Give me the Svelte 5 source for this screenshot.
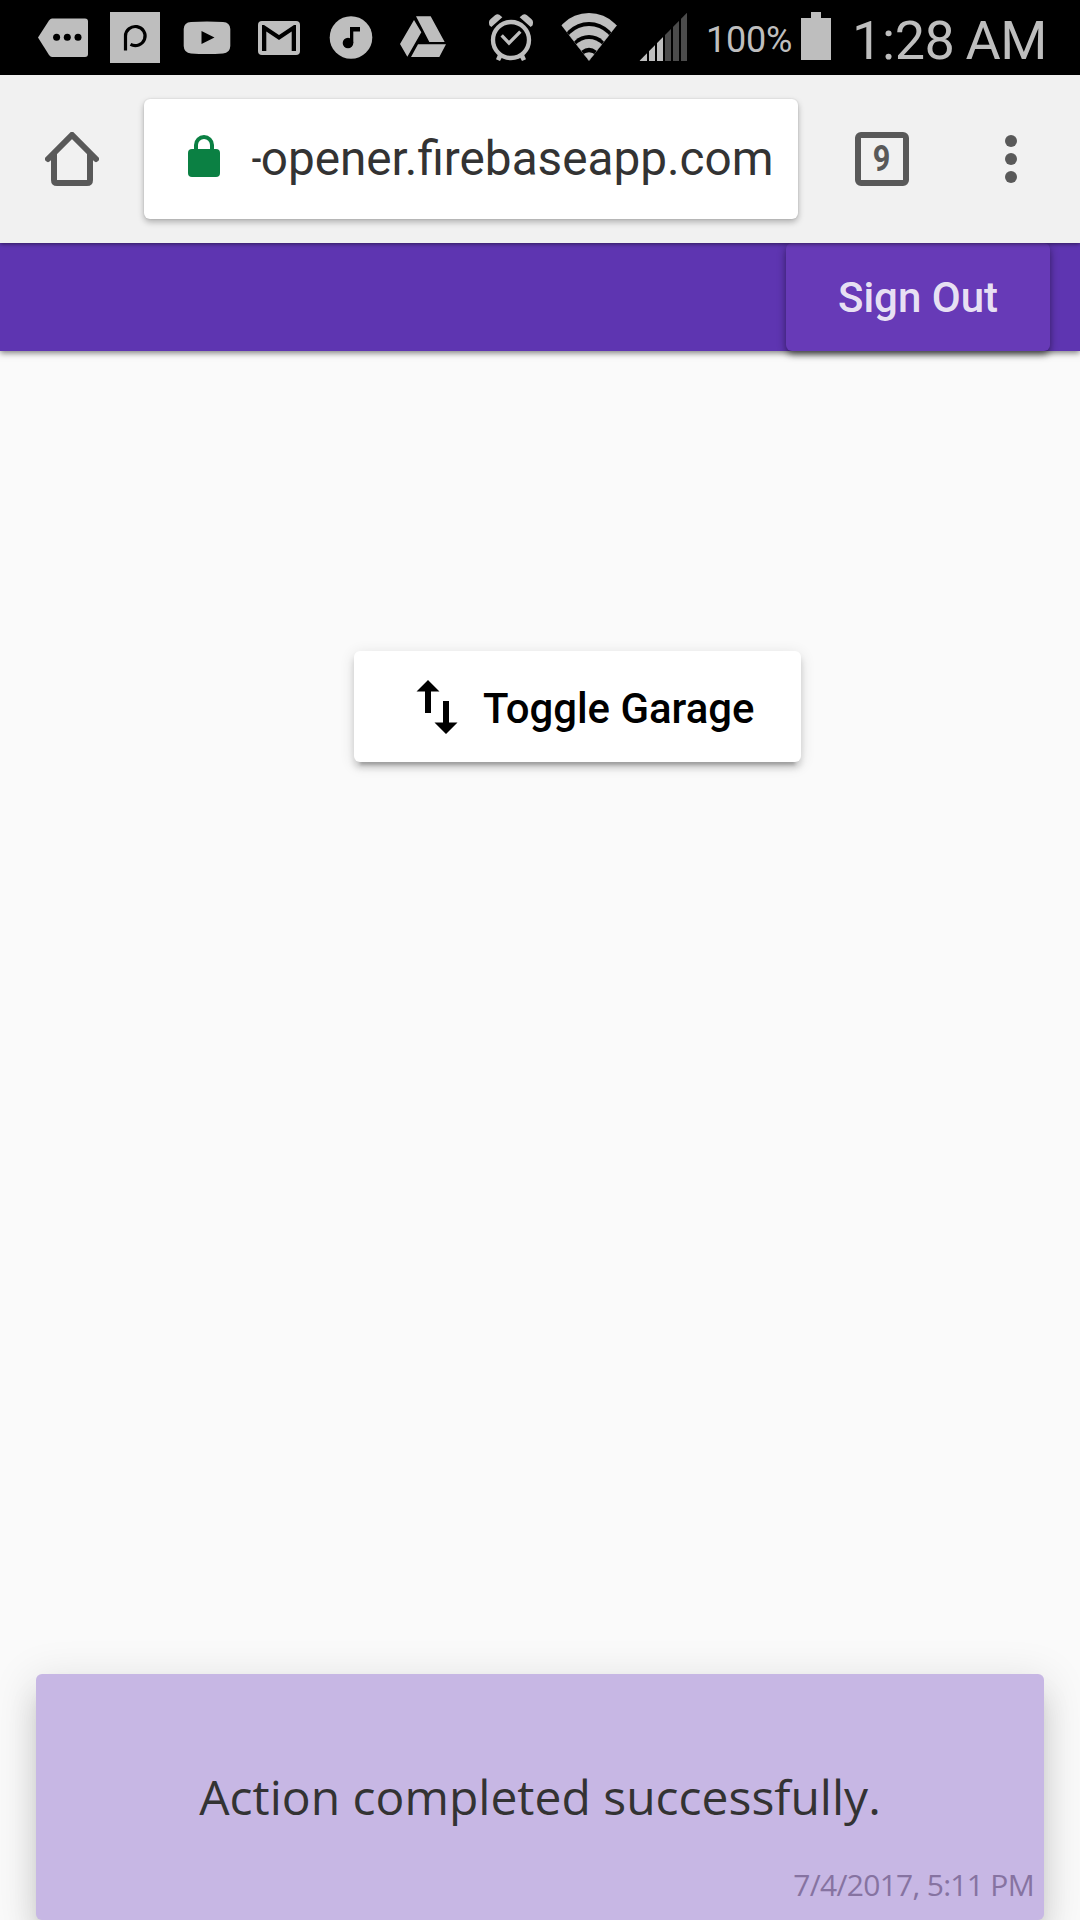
<script>
  const tabCount = 9;
  const toast = { text: 'Action completed successfully.', time: '7/4/2017, 5:11 PM' };
</script>

<div class="screen">
  <header class="status">
    <svg class="w100" viewBox="0 0 100 75"><path class="g" d="M38 37.5 49 20.5Q50.500 18.500 52 18.500H85Q88 18.500 88 21.500V54Q88 57 85 57H52Q50.500 57 49 55Z"/><circle cx="56.600" cy="37.300" r="3.500"/><circle cx="67.300" cy="37.300" r="3.500"/><circle cx="78" cy="37.300" r="3.500"/></svg>
    <svg class="w72" viewBox="100 0 72 75"><path class="g" d="M110 12H160V63H110Z"/><path class="line" d="M125.500 50.500V36A9.800 9.500 0 1 1 130.500 44.300"/></svg>
    <svg class="w72" viewBox="172 0 72 75"><path class="g" d="M191 22Q207 21 223 22Q230 22.300 230.300 29V46Q230 53 223 53.500Q207 54.500 191 53.500Q184 53 183.700 46V29Q184 22.300 191 22Z"/><path d="M201.500 31 214.500 37.500 201.500 44Z"/></svg>
    <svg class="w72" viewBox="244 0 72 75"><rect class="g" x="258" y="21" width="42" height="34" rx="4"/><path d="M262 25H264L279 35 294 25H296V51H291.700V31.500L279 40 266.300 31.500V51H262Z"/></svg>
    <svg class="w72" viewBox="316 0 72 75"><circle class="g" cx="351" cy="37.500" r="21.300"/><circle cx="348" cy="43" r="5.300"/><path d="M350 27H360V31.500H353.300V43H350Z"/></svg>
    <svg class="w87" viewBox="84 0 261 225"><path class="g" d="M168 49H212L254 126H208ZM162 60 184 97 142 170 120 132ZM174 133H258L238 171H153Z"/></svg>
    <svg class="w73" viewBox="345 0 219 225"><circle class="ring" cx="453" cy="120" r="54"/><path class="tick" d="M425 106 447 129 481 95"/><path class="g" d="M387 69Q386 62 392 57L405 46Q411 41 418 44L427 52 394 81 388 76ZM519 69Q520 62 514 57L501 46Q495 41 488 44L479 52 512 81 518 76ZM415 161 427 170 420 183 408 178ZM491 161 479 170 486 183 498 178Z"/></svg>
    <svg class="w77" viewBox="564 0 231 225"><clipPath id="fan"><path d="M604 76 687 182 771 76V30H604Z"/></clipPath><g clip-path="url(#fan)"><circle class="g" cx="687" cy="150.600" r="111.600"/><circle cx="687" cy="153.600" r="87.600"/><circle class="g" cx="687" cy="158" r="80"/><circle cx="687" cy="165.500" r="60.500"/><circle class="g" cx="687" cy="172" r="55"/><circle cx="687" cy="173" r="30"/><circle class="g" cx="687" cy="185" r="28"/></g></svg>
    <svg class="w75" viewBox="795 0 225 225"><clipPath id="ramp"><path d="M838 183 981 38V183Z"/></clipPath><g clip-path="url(#ramp)"><path class="g" d="M838 38H861V183H838ZM867 38H885V183H867ZM891 38H909V183H891Z"/><path class="dim" d="M915 38H933V183H915ZM939 38H957V183H939ZM963 38H981V183H963Z"/></g></svg>
    <span class="percent">100%</span>
    <svg class="w45" viewBox="795 0 45 75"><path class="g" d="M801 18H811V12H821V18H831V60H801Z"/></svg>
    <span class="clock">1:28 AM</span>
  </header>

  <nav class="toolbar">
    <svg class="home" viewBox="0 0 54 54"><path d="M3 27 27 3 51 27M9 22V48Q9 51 12 51H42Q45 51 45 48V22"/></svg>
    <div class="omnibox">
      <svg class="lock" viewBox="0 0 32 42"><rect y="14" width="32" height="28" rx="4"/><path d="M8 16V10A8 8 0 0 1 24 10V16"/></svg>
      <span class="url"><span class="dash">-</span>opener.firebaseapp.com</span>
    </div>
    <div class="tabs"><span>{tabCount}</span></div>
    <svg class="menu" viewBox="0 0 12 48"><circle cx="6" cy="6" r="6"/><circle cx="6" cy="24" r="6"/><circle cx="6" cy="42" r="6"/></svg>
  </nav>

  <div class="appbar"><button class="signout"><span>Sign Out</span></button></div>

  <main>
    <button class="toggle">
      <svg viewBox="0 0 42 54"><path d="M12 0 23.500 11.500H15V33H9V11.500H.5ZM27 21H33V42.500H41.500L30 54 18.500 42.500H27Z"/></svg>
      <span>Toggle Garage</span>
    </button>
  </main>

  <section class="toast">
    <p>{toast.text}</p>
    <time>{toast.time}</time>
  </section>
</div>

<style>
  :global(body) { margin: 0; background: #fafafa; }
  .screen { width: 1080px; height: 1920px; display: flex; flex-direction: column; overflow: hidden; background: #fafafa; font-family: Roboto, sans-serif; }
  svg { display: block; flex: none; }
  button { font-family: inherit; border: 0; padding: 0; }
  span { white-space: nowrap; }

  .status { height: 75px; flex: none; display: flex; background: #000; color: #bebebe; }
  .status svg { height: 75px; }
  .g { fill: #bebebe; }
  .dim { fill: #4b4b4b; }
  .line { fill: none; stroke: #000; stroke-width: 3.2; }
  .ring { fill: none; stroke: #bebebe; stroke-width: 13; }
  .tick { fill: none; stroke: #bebebe; stroke-width: 10; }
  .w100 { width: 100px; }
  .w72 { width: 72px; }
  .w87 { width: 87px; }
  .w73 { width: 73px; }
  .w77 { width: 77px; }
  .w75 { width: 75px; }
  .w45 { width: 45px; }
  .percent { width: 89px; margin-left: 6px; font-size: 36px; line-height: 80px; letter-spacing: -.2px; }
  .clock { margin-left: 12px; font-size: 54px; line-height: 81px; font-weight: 400; letter-spacing: -.4px; word-spacing: -2px; }

  .toolbar { height: 168px; flex: none; display: flex; align-items: center; background: #f1f1f1; padding-left: 45px; box-sizing: border-box; position: relative; z-index: 2; box-shadow: 0 1px 4px rgba(0, 0, 0, .5); }
  .home { width: 54px; height: 54px; fill: none; stroke: #595959; stroke-width: 6; stroke-linecap: round; }
  .omnibox { width: 654px; height: 120px; margin-left: 45px; box-sizing: border-box; padding-left: 44px; display: flex; align-items: center; background: #fff; border-radius: 6px; box-shadow: 0 3px 6px rgba(0, 0, 0, .28), 0 0 2px rgba(0, 0, 0, .12); }
  .lock { width: 32px; height: 42px; margin-bottom: 6px; fill: #0b8043; }
  .lock path { fill: none; stroke: #0b8043; stroke-width: 4; }
  .url { margin-left: 27.5px; display: flex; font-size: 47.7px; line-height: 58px; color: #333; }
  .dash { transform: scaleX(.72); transform-origin: right; }
  .tabs { width: 54px; height: 54px; margin-left: 57px; box-sizing: border-box; border: 6px solid #595959; border-radius: 6px; display: flex; align-items: center; justify-content: center; color: #595959; font-size: 37px; line-height: 42px; font-weight: 700; }
  .tabs span { transform: scaleX(.83); }
  .menu { width: 12px; height: 48px; margin-left: 96px; fill: #595959; }

  .appbar { height: 108px; flex: none; display: flex; justify-content: flex-end; padding-right: 30px; background: #5e35b1; box-shadow: 0 2px 6px rgba(0, 0, 0, .5); }
  .signout { width: 264px; height: 108px; border-radius: 6px; background: #673ab7; color: rgba(255, 255, 255, .87); font-size: 42px; line-height: 110px; font-weight: 500; box-shadow: 0 3px 9px rgba(0, 0, 0, .4), 0 6px 6px -3px rgba(0, 0, 0, .3); }

  main { flex: 1; padding: 300px 0 0 354px; }
  .toggle { width: 447px; height: 111px; display: flex; align-items: center; padding-left: 62px; border-radius: 6px; background: #fff; color: #000; font-size: 41.9px; line-height: 111px; font-weight: 500; box-shadow: 0 9px 3px -6px rgba(0, 0, 0, .2), 0 6px 6px rgba(0, 0, 0, .14), 0 3px 15px rgba(0, 0, 0, .12); }
  .toggle svg { width: 42px; height: 54px; margin-top: 1px; }
  .toggle span { margin-left: 25px; padding-top: 3px; }

  .toast { width: 1008px; height: 246px; flex: none; margin: 0 auto; box-sizing: border-box; padding-top: 87px; display: flex; flex-direction: column; background: #c7b7e4; border-radius: 6px; font-family: "Open Sans", sans-serif; box-shadow: 0 15px 15px -9px rgba(0, 0, 0, .16), 0 24px 30px 0 rgba(0, 0, 0, .1), 0 9px 42px 6px rgba(0, 0, 0, .1); }
  .toast p { margin: 0; text-align: center; color: #333; font-size: 48px; line-height: 71px; }
  .toast time { margin: 32px 10px 0 0; text-align: right; color: #8673a1; font-size: 30px; line-height: 41px; letter-spacing: -.7px; }
</style>
